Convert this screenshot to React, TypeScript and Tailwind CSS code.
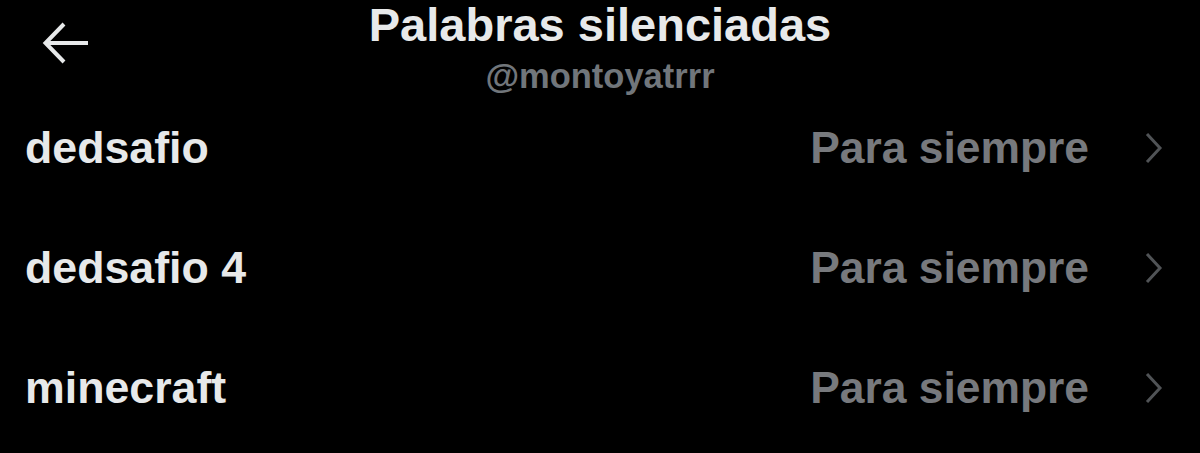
import React from "react";

const words = ["dedsafio", "dedsafio 4", "minecraft"];

function BackArrow() {
  return (
    <svg width="48" height="48" viewBox="0 0 48 48" fill="none" stroke="#e7e9ea" strokeWidth="4" strokeLinecap="butt" strokeLinejoin="miter">
      <path d="M4 24 H47" />
      <path d="M23 5 L4.5 24 L23 43" />
    </svg>
  );
}

function Chevron() {
  return (
    <svg width="20" height="32" viewBox="0 0 20 32" fill="none" stroke="#505356" strokeWidth="3">
      <path d="M3 2 L16 16 L3 30" />
    </svg>
  );
}

export default function App() {
  return (
    <div className="w-[1200px] h-[453px] bg-black overflow-hidden font-['Liberation_Sans',Arial,sans-serif] font-bold">
      <header className="grid grid-cols-[1fr_auto_1fr] h-[88px]">
        <div className="pl-[41px] pt-[19px]">
          <BackArrow />
        </div>
        <div className="flex flex-col items-center pt-[2px]">
          <h1 className="text-[47px] leading-[46px] text-[#e7e9ea]">Palabras silenciadas</h1>
          <p className="mt-[11px] text-[34.5px] leading-[34px] text-[#71767b]">@montoyatrrr</p>
        </div>
        <div />
      </header>
      <ul>
        {words.map((word) => (
          <li key={word} className="flex items-center justify-between h-[120px] pl-[25px] pr-[36px]">
            <span className="text-[44.7px] leading-[44px] text-[#e7e9ea]">{word}</span>
            <div className="flex items-center gap-[55px]">
              <span className="text-[44.4px] leading-[44px] text-[#77797d]">Para siempre</span>
              <Chevron />
            </div>
          </li>
        ))}
      </ul>
    </div>
  );
}
